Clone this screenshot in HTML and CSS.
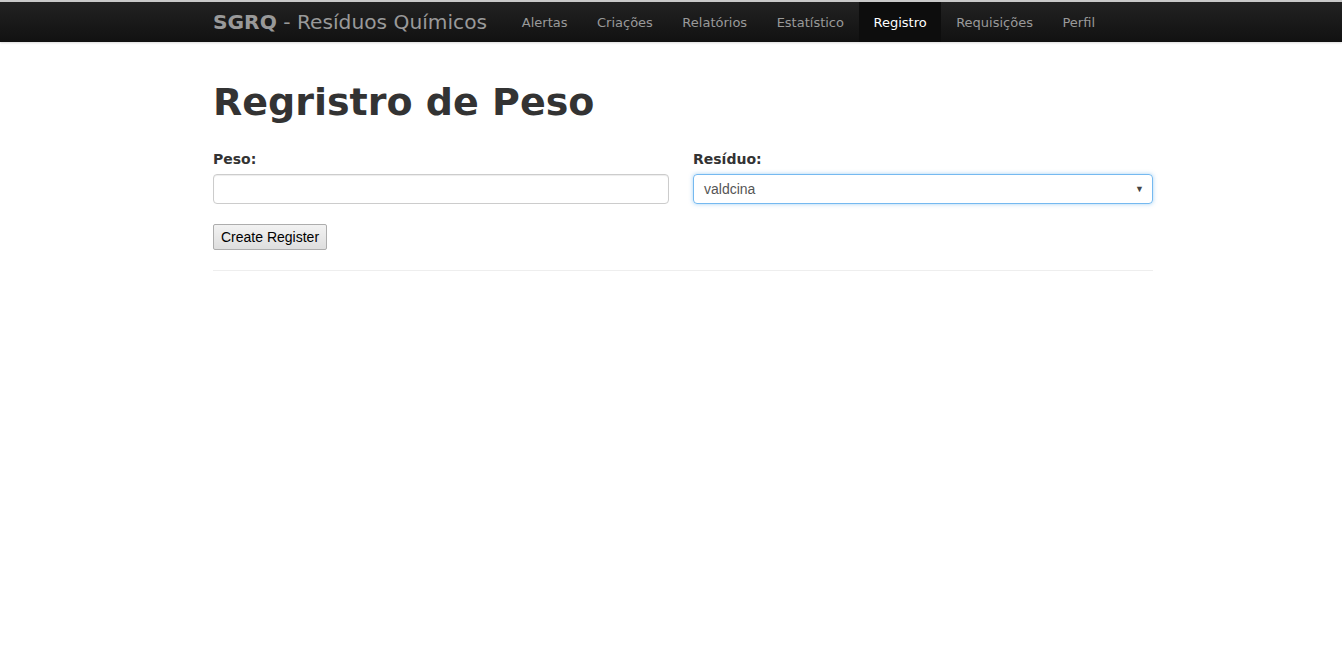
FILE: index.html
```html
<!DOCTYPE html>
<html lang="pt">
<head>
<meta charset="utf-8">
<title>SGRQ - Registro</title>
<link rel="stylesheet" href="styles.css">
</head>
<body>
<div class="navbar">
  <div class="nav-inner">
    <a class="brand" href="#"><b>SGRQ</b> - Resíduos Químicos</a>
    <ul class="nav">
      <li><a href="#">Alertas</a></li>
      <li><a href="#">Criações</a></li>
      <li><a href="#">Relatórios</a></li>
      <li><a href="#">Estatístico</a></li>
      <li class="active"><a href="#">Registro</a></li>
      <li><a href="#">Requisições</a></li>
      <li><a href="#">Perfil</a></li>
    </ul>
  </div>
</div>
<div class="container">
  <h1 class="title">Regristro de Peso</h1>
  <form class="form">
    <div class="row">
      <div class="field">
        <label class="label" for="peso">Peso:</label>
        <input class="input" id="peso" type="text">
      </div>
      <div class="field">
        <label class="label" for="residuo">Resíduo:</label>
        <div class="select">
          <span class="select-value">valdcina</span>
          <span class="select-arrow">▼</span>
        </div>
      </div>
    </div>
    <button class="button" type="button">Create Register</button>
  </form>
  <hr class="rule">
</div>
</body>
</html>
```

FILE: styles.css
```css
* { box-sizing: border-box; }
html, body { margin: 0; padding: 0; background: #fff; }
body {
  font-family: "DejaVu Sans", Verdana, sans-serif;
  color: #333;
  font-size: 14px;
}
.navbar {
  height: 42px;
  border-top: 2px solid #c9c9c9;
  background: linear-gradient(#222222, #111111);
  box-shadow: 0 1px 2px rgba(0,0,0,0.15);
}
.nav-inner {
  width: 964px;
  margin: 0 auto;
  padding-left: 24px;
  display: flex;
  align-items: stretch;
  height: 40px;
}
.brand {
  color: #999;
  font-size: 20.2px;
  text-decoration: none;
  line-height: 39px;
  padding-top: 1px;
  margin-right: 20px;
  white-space: nowrap;
}
.brand b { font-weight: bold; }
.nav {
  list-style: none;
  margin: 0;
  padding: 0;
  display: flex;
}
.nav li a {
  display: block;
  padding: 1px 14.75px 0;
  line-height: 39px;
  color: #999;
  text-decoration: none;
  font-size: 13px;
}
.nav li.active a {
  background: #0d0d0d;
  color: #fff;
}
.container {
  width: 964px;
  margin: 0 auto;
  padding-left: 24px;
}
.title {
  font-size: 38px;
  font-weight: bold;
  margin: 35px 0 0;
  line-height: 50px;
  color: #333;
}
.form { margin-top: 22px; }
.row {
  display: flex;
  gap: 20px;
}
.field { width: 460px; }
.label {
  display: block;
  font-weight: bold;
  font-size: 14px;
  line-height: 20px;
  margin-bottom: 5px;
}
.input {
  display: block;
  width: 456px;
  height: 30px;
  border: 1px solid #ccc;
  border-radius: 4px;
  box-shadow: inset 0 1px 1px rgba(0,0,0,0.075);
  padding: 4px 6px;
  font-family: "Liberation Sans", Arial, sans-serif;
  font-size: 14px;
  background: #fff;
}
.select {
  width: 460px;
  height: 30px;
  border: 1px solid rgba(82,168,236,0.8);
  border-radius: 4px;
  box-shadow: 0 0 4px rgba(82,168,236,0.5);
  display: flex;
  align-items: center;
  justify-content: space-between;
  padding: 0 8px 0 10px;
  font-family: "Liberation Sans", Arial, sans-serif;
  font-size: 14px;
  color: #555;
}
.select-arrow {
  font-size: 9px;
  color: #444;
}
.button {
  margin-top: 20px;
  height: 26px;
  padding: 1px 7px;
  font-family: "Liberation Sans", Arial, sans-serif;
  font-size: 14px;
  color: #000;
  background: linear-gradient(#f2f2f2, #dedede);
  border: 1px solid #adadad;
  border-radius: 2px;
}
.rule {
  margin: 20px 0 0;
  border: 0;
  border-top: 1px solid #eee;
}
```
